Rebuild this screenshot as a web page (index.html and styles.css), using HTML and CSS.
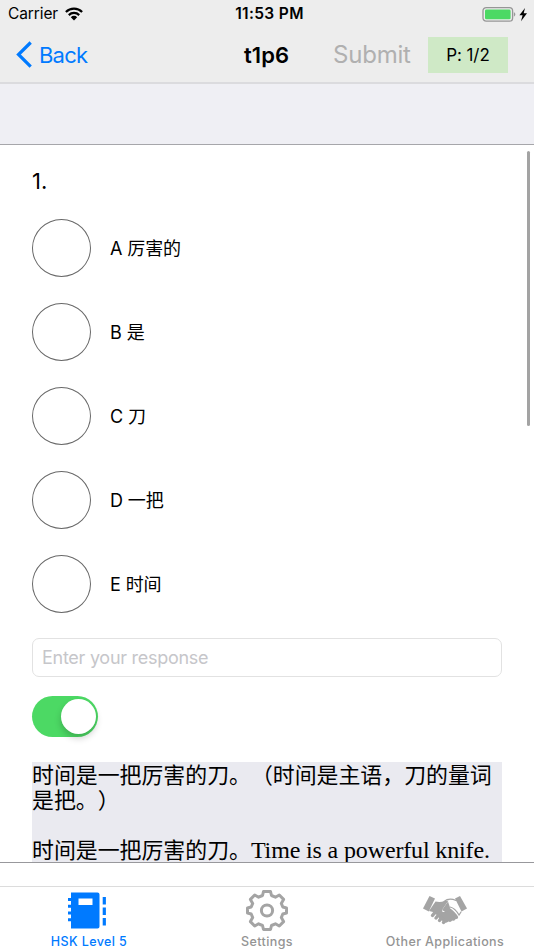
FILE: index.html
```html
<!DOCTYPE html>
<html lang="zh-CN">
<head>
<meta charset="utf-8">
<title>t1p6</title>
<link rel="stylesheet" href="styles.css">
</head>
<body>
<header class="top">
  <div class="status">
    <div class="carrier"><span>Carrier</span>
      <svg width="18" height="14" viewBox="0 0 18 14"><g fill="none" stroke="#000" stroke-width="2.2"><path d="M.9 5A11.6 11.6 0 0 1 17.1 5"/><path d="M3.8 8.1a7.4 7.4 0 0 1 10.4 0"/></g><path d="M5.8 10.2a4.500 4.500 0 0 1 6.400 0L9 13.400z"/></svg>
    </div>
    <time>11:53 PM</time>
    <div class="power">
      <svg width="48" height="18" viewBox="0 0 48 18"><rect x="1" y="2.600" width="29.600" height="13.600" rx="3.200" fill="none" stroke="#969696" stroke-width="1.300"/><rect x="3" y="4.500" width="25.600" height="9.800" rx="1.400" fill="#4cd964"/><path d="M31.900 7.100q3 2.300 0 4.600z" fill="#999"/><path d="M43 3 37.400 10.200h3.200l-1.600 6L45 8.200h-3.300z"/></svg>
    </div>
  </div>
  <nav class="nav">
    <a class="back"><svg width="18" height="28" viewBox="0 0 18 28"><path d="M15.700 1.500 3.500 13.500l12.200 12.200" fill="none" stroke="#007aff" stroke-width="3.200"/></svg><span>Back</span></a>
    <h1>t1p6</h1>
    <span class="submit">Submit</span>
    <span class="page">P: 1/2</span>
  </nav>
</header>
<div class="spacer"></div>
<main class="sheet">
  <h2>1.</h2>
  <ul class="options">
    <li><i class="radio"></i><span>A 厉害的</span></li>
    <li><i class="radio"></i><span>B 是</span></li>
    <li><i class="radio"></i><span>C 刀</span></li>
    <li><i class="radio"></i><span>D 一把</span></li>
    <li><i class="radio"></i><span>E 时间</span></li>
  </ul>
  <div class="field"><span>Enter your response</span></div>
  <div class="switch"><i></i></div>
  <div class="passage"><p>时间是一把厉害的刀。（时间是主语，刀的量词是把。）</p><p>时间是一把厉害的刀。<span class="en">Time is a powerful knife.</span></p></div>
  <div class="scrollbar"></div>
</main>
<footer class="tabs">
  <a class="tab active">
    <svg width="42" height="38" viewBox="0 0 42 38"><path fill="#007aff" fill-rule="evenodd" d="M4 1.500h26.500q2 0 2 2v32q0 2-2 2H4zM11.500 7.500v6.500h14V7.500z"/><path d="M1 8.500h4M1 15.300h4M1 22h4M1 28.700h4" stroke="#007aff" stroke-width="3"/><path d="M37.300 6v7.500M37.300 16.500v7.500M37.300 27v7.500" stroke="#007aff" stroke-width="3.200"/></svg>
    <span>HSK Level 5</span>
  </a>
  <a class="tab">
    <svg width="42" height="42" viewBox="0 0 42 42"><g fill="none" stroke="#a4a4a4" stroke-width="3" stroke-linejoin="round"><path d="m16.500 6.500 1-4h7l1 4 3.900 1.700 3.900-2.200 4.300 4.400-2.300 4 1.500 3.600 3.700 1v5l-3.700 1-1.500 3.600 2.300 4-4.300 4.400-3.900-2.200-3.900 1.700-1 4h-7l-1-4-3.900-1.700L8.700 37l-4.300-4.400 2.300-4L5.200 25l-3.700-1v-5l3.700-1 1.500-3.600-2.300-4L8.700 6l3.900 2.200z"/><circle cx="21" cy="21.500" r="5.600"/></g></svg>
    <span>Settings</span>
  </a>
  <a class="tab">
    <svg width="46" height="30" viewBox="0 0 46 30"><g fill="#a4a4a4"><path d="m7.500 1 5.500 2.500-6.200 13L1 13.500z"/><path d="m38 1-5 2.500 6.500 13 5.500-3z"/><path d="M13.500 6.500q5 1 9-.5l4-.5-6.200 9q-.7 3 2 2.500 3-.8 4.700-4.500 6.500 4.500 9.200 9.500 0 2.500-2.500 2-1 2.500-3.500 1.500-1.500 2.200-3.700 1-2 2-4.500.5l-5-3.500-1-3-3-1.500-2-2-4-1z"/><path d="m20 15 6-8.500 2 6-4 5z"/></g><g fill="none" stroke="#a4a4a4" stroke-linecap="round"><path d="M22 6.500q5-4 12-1M28 12q5 1 9 8l2-3" stroke-width="1.200"/><path d="m10.500 20.500 2-2.500M14 23l2.500-3M17.500 25.500l2.500-3M21.500 27.500l1.500-2" stroke-width="3.400"/></g></svg>
    <span>Other Applications</span>
  </a>
</footer>
</body>
</html>
```
FILE: styles.css
```css
* { box-sizing: border-box; }
body {
  margin: 0;
  width: 534px;
  height: 950px;
  overflow: hidden;
  display: flex;
  flex-direction: column;
  background: #fff;
  color: #000;
  font-family: Inter, "Noto Sans CJK SC", sans-serif;
  text-spacing-trim: space-all;
  text-autospace: no-autospace;
}
svg { display: block; flex: none; }
h1, h2, p, ul { margin: 0; padding: 0; }
.top { height: 84px; flex: none; background: #ededed; border-bottom: 2px solid #dbdbde; }
.status {
  height: 27px;
  padding: 0 4px 0 8px;
  display: grid;
  grid-template-columns: 1fr auto 1fr;
  align-items: center;
  font-size: 15.5px;
}
.carrier { display: flex; align-items: center; gap: 7px; }
.carrier span { letter-spacing: -0.1px; }
.status time { padding-left: 1px; font-weight: 600; letter-spacing: 0.35px; }
.power { display: flex; justify-content: flex-end; }
.nav { height: 55px; display: flex; align-items: center; padding-left: 15px; }
.back { width: 229px; display: flex; align-items: center; gap: 6px; color: #007aff; font-size: 22px; letter-spacing: -0.8px; }
.nav h1 { width: 89px; font-size: 22px; line-height: 28px; font-weight: 600; letter-spacing: 0.1px; }
.submit { width: 95px; font-size: 24px; letter-spacing: -0.2px; color: #b0b0b0; }
.page { width: 80px; height: 36px; display: grid; place-items: center; background: #cfe9c6; font-size: 17px; letter-spacing: -0.1px; }
.spacer { height: 61px; flex: none; background: #efeff4; border-bottom: 1px solid #a6a6aa; }
.sheet {
  position: relative;
  height: 718px;
  flex: none;
  padding: 20px 32px 0;
  overflow: hidden;
  border-bottom: 1px solid #98989c;
}
.sheet h2 { height: 32px; line-height: 32px; font-size: 22px; font-weight: 400; }
.options { list-style: none; margin-top: 22px; display: grid; gap: 26px; }
.options li { height: 58px; display: flex; align-items: center; gap: 19px; font-size: 18px; letter-spacing: -0.1px; }
.options span { padding-bottom: 2px; }
.radio { width: 59px; height: 58px; border: 1px solid #686868; border-radius: 50%; }
.field {
  height: 39px;
  margin-top: 25px;
  padding-left: 9px;
  display: flex;
  align-items: center;
  border: 1px solid #e2e2e2;
  border-radius: 7px;
  color: #c6c6ca;
  font-size: 18px;
  letter-spacing: -0.27px;
}
.switch {
  width: 66px;
  height: 41px;
  margin-top: 19px;
  padding: 3px 2px;
  display: flex;
  justify-content: flex-end;
  background: #4cd964;
  border-radius: 21px;
}
.switch i { width: 35px; height: 35px; border-radius: 50%; background: #fff; box-shadow: 0 4px 7px rgba(0, 0, 0, .2); }
.passage {
  height: 120px;
  margin-top: 25px;
  display: grid;
  gap: 25px;
  align-content: start;
  background: #eaeaf0;
  font-family: "Noto Sans CJK SC", sans-serif;
  font-size: 21.900px;
  line-height: 25px;
}
.passage p { margin-top: -1px; margin-bottom: 1px; }
.passage .en { font-family: "Liberation Serif", serif; font-size: 24px; line-height: 20px; letter-spacing: -0.14px; }
.scrollbar { position: absolute; top: 6px; right: 4px; width: 3px; height: 275px; border-radius: 2px; background: #a3a3a3; }
.tabs {
  height: 64px;
  margin-top: 23px;
  flex: none;
  display: grid;
  grid-template-columns: repeat(3, 178px);
  border-top: 1px solid #dcdcdc;
  color: #949494;
}
.tab { display: grid; grid-template-rows: 46px 17px; justify-items: center; align-items: center; font-size: 12.500px; font-weight: 500; letter-spacing: .4px; }
.tab.active { color: #007aff; }
.tab.active svg { margin-right: 2px; }
```
